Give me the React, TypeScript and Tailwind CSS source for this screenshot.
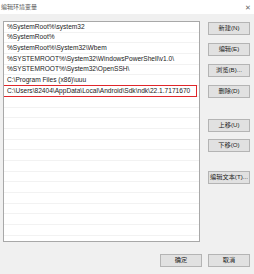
import React from "react";

const paths = [
  "%SystemRoot%\\system32",
  "%SystemRoot%",
  "%SystemRoot%\\System32\\Wbem",
  "%SYSTEMROOT%\\System32\\WindowsPowerShell\\v1.0\\",
  "%SYSTEMROOT%\\System32\\OpenSSH\\",
  "C:\\Program Files (x86)\\uuu",
  "C:\\Users\\82404\\AppData\\Local\\Android\\Sdk\\ndk\\22.1.7171670",
];

const font = { fontFamily: '"Liberation Sans", "Noto Sans CJK SC", sans-serif' };

function Btn({ label, className = "" }: { label: string; className?: string }) {
  return (
    <div
      className={`h-[13px] w-[42px] flex items-center justify-center bg-[#e1e1e1] border border-[#b4b4b4] text-[6.2px] leading-none text-[#222] ${className}`}
    >
      {label}
    </div>
  );
}

export default function App() {
  const rows = Array.from({ length: 22 }, (_, i) => paths[i] ?? "");

  return (
    <div className="w-[254px] h-[274px] bg-[#f0f0f0] flex flex-col overflow-hidden" style={font}>
      {/* title bar */}
      <div className="h-[14px] bg-white flex items-center justify-between pl-[1px] pr-[3px]">
        <span className="text-[6px] leading-none text-[#555]">编辑环境变量</span>
        <span className="text-[7px] leading-none text-[#666]">✕</span>
      </div>

      <div className="flex pl-[3px] pt-[7px]">
        {/* list */}
        <div className="w-[197px] h-[221px] bg-white border border-[#a8a8a8] overflow-hidden">
          {rows.map((p, i) => (
            <div
              key={i}
              className="relative h-[10.7px] border-b border-[#f2f2f2] flex items-center pl-[3px] text-[6.6px] leading-none text-[#222] whitespace-nowrap"
            >
              {p}
              {i === 6 && (
                <span className="absolute -left-[1px] right-[2px] -top-[1px] -bottom-[1px] border-[1.5px] border-[#e0262b]" />
              )}
            </div>
          ))}
        </div>

        {/* side buttons */}
        <div className="ml-[8px] pt-[1px] flex flex-col">
          <Btn label="新建(N)" />
          <Btn label="编辑(E)" className="mt-[8px]" />
          <Btn label="浏览(B)..." className="mt-[8px]" />
          <Btn label="删除(D)" className="mt-[8px]" />
          <Btn label="上移(U)" className="mt-[21px]" />
          <Btn label="下移(O)" className="mt-[7px]" />
          <Btn label="编辑文本(T)..." className="mt-[19px]" />
        </div>
      </div>

      {/* footer */}
      <div className="flex justify-end gap-[6px] pr-[4px] mt-[12px]">
        <Btn label="确定" />
        <Btn label="取消" />
      </div>
    </div>
  );
}
